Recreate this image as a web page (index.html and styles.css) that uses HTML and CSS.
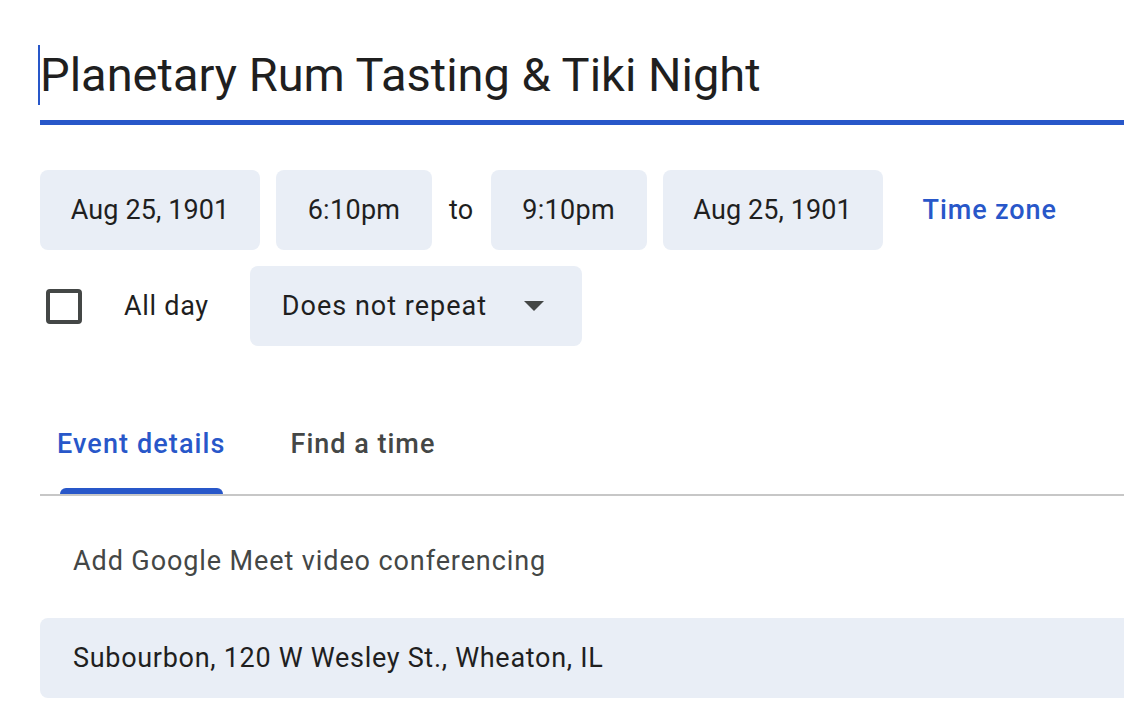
FILE: index.html
```html
<!DOCTYPE html>
<html lang="en">
<head>
<meta charset="utf-8">
<title>Event</title>
<link rel="stylesheet" href="styles.css">
</head>
<body>
<main class="editor">
  <div class="title-field">
    <span class="title-text">Planetary Rum Tasting &amp; Tiki Night</span>
  </div>

  <div class="date-row">
    <div class="chip chip-date">Aug 25, 1901</div>
    <div class="chip chip-time">6:10pm</div>
    <span class="to">to</span>
    <div class="chip chip-time">9:10pm</div>
    <div class="chip chip-date">Aug 25, 1901</div>
    <a class="tz-link">Time zone</a>
  </div>

  <div class="option-row">
    <span class="checkbox"></span>
    <span class="allday">All day</span>
    <div class="chip dropdown">
      <span>Does not repeat</span>
      <svg class="caret" width="20" height="10" viewBox="0 0 20 10"><path d="M0 0 L20 0 L10 10 Z" fill="#444746"/></svg>
    </div>
  </div>

  <div class="tabs">
    <div class="tab active">Event details</div>
    <div class="tab">Find a time</div>
  </div>

  <div class="meet">Add Google Meet video conferencing</div>

  <div class="location">Subourbon, 120 W Wesley St., Wheaton, IL</div>
</main>
</body>
</html>
```

FILE: styles.css
```css
html, body {
  margin: 0;
  padding: 0;
  background: #ffffff;
  overflow: hidden;
}

body {
  font-family: Roboto, "Liberation Sans", sans-serif;
  color: #1f1f1f;
  font-size: 27px;
}

.editor {
  padding-left: 40px;
  width: 1084px;
}

.title-field {
  padding-top: 45px;
  padding-bottom: 15px;
  border-bottom: 5px solid #2857c9;
}

.title-text {
  display: inline-block;
  font-size: 47px;
  line-height: 60px;
  height: 60px;
  border-left: 2px solid #2857c9;
  margin-left: -2px;
  color: #1f1f1f;
}

.date-row {
  display: flex;
  align-items: center;
  margin-top: 45px;
  gap: 16px;
}

.chip {
  height: 80px;
  box-sizing: border-box;
  background: #e9eef6;
  border-radius: 8px;
  display: flex;
  align-items: center;
  justify-content: center;
  color: #1f1f1f;
}

.chip-date { width: 220px; letter-spacing: 0.1px; }
.chip-time { width: 156px; letter-spacing: 0.3px; }

.to {
  color: #1f1f1f;
  margin: 0 1px;
  letter-spacing: 0.3px;
}

.tz-link {
  color: #2857c9;
  margin-left: 24px;
  font-weight: 500;
  letter-spacing: 0.9px;
}

.option-row {
  display: flex;
  align-items: center;
  margin-top: 16px;
}

.checkbox {
  width: 36px;
  height: 35px;
  box-sizing: border-box;
  border: 4px solid #444746;
  border-radius: 4px;
  margin-left: 6px;
}

.allday {
  margin-left: 42px;
  margin-right: 41px;
  letter-spacing: 0.7px;
}

.dropdown {
  width: 332px;
  justify-content: space-between;
  padding: 0 38px 0 32px;
  letter-spacing: 1px;
}

.tabs {
  display: flex;
  margin-top: 82px;
  border-bottom: 2px solid #c7c7c7;
  gap: 31px;
}

.tab {
  position: relative;
  line-height: 32px;
  padding: 0 17px 34px;
  color: #444746;
  font-weight: 500;
  letter-spacing: 1px;
}

.tab.active {
  color: #2857c9;
  letter-spacing: 1.1px;
}

.tab.active::after {
  content: "";
  position: absolute;
  left: 20px;
  right: 20px;
  bottom: 0;
  height: 6px;
  background: #2857c9;
  border-radius: 6px 6px 0 0;
}

.meet {
  line-height: 32px;
  color: #444746;
  padding-left: 33px;
  margin-top: 49px;
  margin-bottom: 41px;
  letter-spacing: 0.9px;
}

.location {
  height: 80px;
  display: flex;
  align-items: center;
  padding-left: 33px;
  background: #e9eef6;
  border-radius: 8px 0 0 8px;
  color: #1f1f1f;
  letter-spacing: 0.7px;
}
```
